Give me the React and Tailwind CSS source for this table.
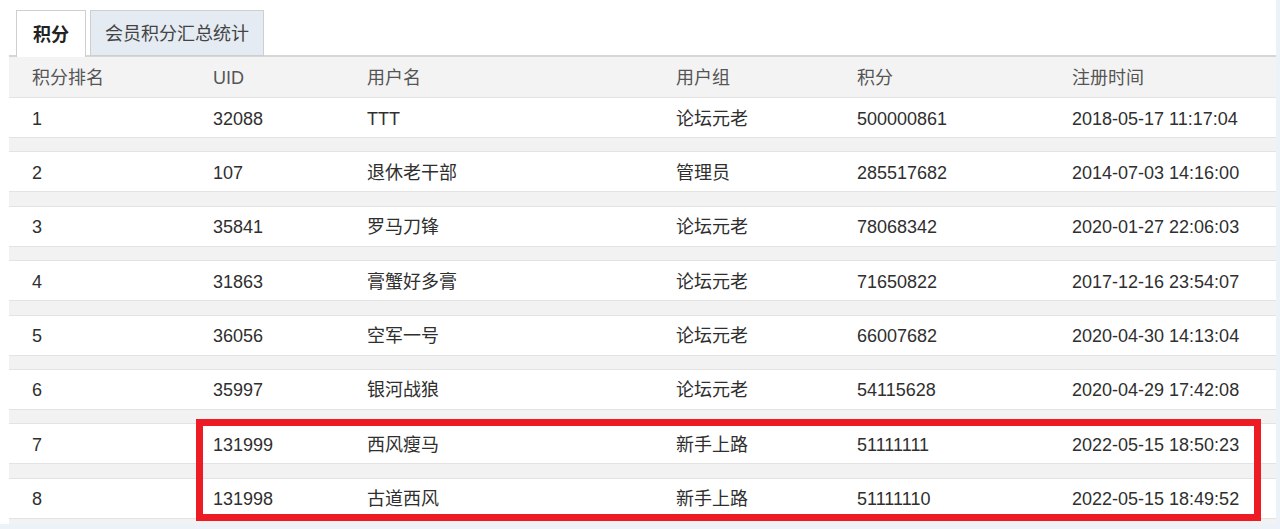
import React from "react";

const rows = [
  ["1", "32088", "TTT", "论坛元老", "500000861", "2018-05-17 11:17:04"],
  ["2", "107", "退休老干部", "管理员", "285517682", "2014-07-03 14:16:00"],
  ["3", "35841", "罗马刀锋", "论坛元老", "78068342", "2020-01-27 22:06:03"],
  ["4", "31863", "膏蟹好多膏", "论坛元老", "71650822", "2017-12-16 23:54:07"],
  ["5", "36056", "空军一号", "论坛元老", "66007682", "2020-04-30 14:13:04"],
  ["6", "35997", "银河战狼", "论坛元老", "54115628", "2020-04-29 17:42:08"],
  ["7", "131999", "西风瘦马", "新手上路", "51111111", "2022-05-15 18:50:23"],
  ["8", "131998", "古道西风", "新手上路", "51111110", "2022-05-15 18:49:52"],
];

const headers = ["积分排名", "UID", "用户名", "用户组", "积分", "注册时间"];

const grid = "grid grid-cols-[181px_154px_309px_181px_215px_227px]";

export default function App() {
  return (
    <div
      className="min-h-screen bg-[#edf2f9] text-[18px] text-[#2f2f2f]"
      style={{ fontFamily: '"Liberation Sans", "Noto Sans CJK SC", sans-serif' }}
    >
      <div className="relative w-[1276px] h-[524px] overflow-hidden bg-white pl-[9px] pt-[11px]">
        {/* Tabs */}
        <div className="flex items-end gap-[4px] pl-[7px] border-b-2 border-[#d6d6d6] h-[46px]">
          <div className="h-[47px] -mb-[2px] px-[16px] pt-[2px] flex items-center bg-white border border-b-0 border-[#cfcfcf] font-bold text-[#222]">
            积分
          </div>
          <div className="h-[46px] -mb-[1px] px-[14px] pt-[2px] flex items-center bg-[#e4ebf2] border border-[#cfcfcf] text-[#444]">
            会员积分汇总统计
          </div>
        </div>

        {/* Header */}
        <div className={`${grid} h-[40px] pt-[3px] items-center bg-[#f3f3f3] text-[#555]`}>
          {headers.map((h) => (
            <div key={h} className="pl-[23px] whitespace-nowrap">
              {h}
            </div>
          ))}
        </div>

        {/* Rows */}
        {rows.map((r) => (
          <div key={r[0]}>
            <div className={`${grid} h-[40px] pt-[3px] items-center bg-white border-t border-[#e3e3e3]`}>
              {r.map((c, i) => (
                <div key={i} className="pl-[23px] whitespace-nowrap">
                  {c}
                </div>
              ))}
            </div>
            <div className="h-[14.4px] bg-[#f2f2f2] border-t border-[#e3e3e3]" />
          </div>
        ))}

        {/* Red annotation box */}
        <div className="absolute left-[196px] top-[419px] w-[1065px] h-[102px] border-[7px] border-[#ed1c24] pointer-events-none" />
      </div>
    </div>
  );
}
